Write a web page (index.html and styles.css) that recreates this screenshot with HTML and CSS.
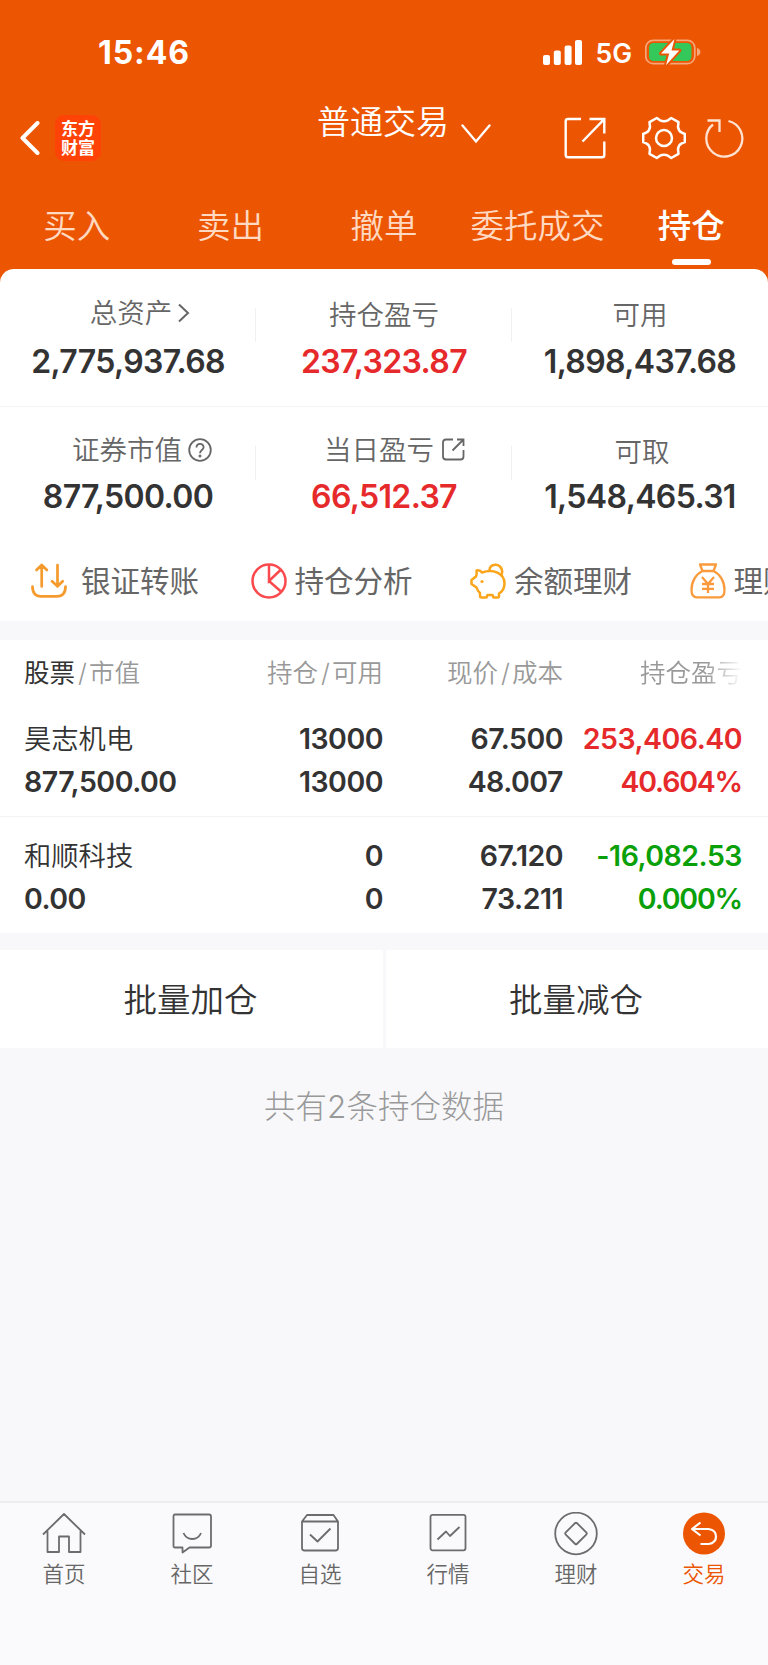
FILE: index.html
```html
<!DOCTYPE html>
<html lang="zh-CN">
<head>
    <meta charset="UTF-8">
    <meta name="viewport" content="width=device-width, initial-scale=1.0">
    <title>普通交易</title>
    <link rel="stylesheet" href="styles.css">
</head>
<body>
    <header class="header">
        <div class="status">
            <span class="time">15:46</span>
            <div class="status-right">
                <svg class="signal" width="39" height="25" viewBox="0 0 39 25" fill="#fff">
                    <rect x="0" y="15" width="7" height="10" rx="2"/>
                    <rect x="10.8" y="10.5" width="7" height="14.5" rx="2"/>
                    <rect x="21.6" y="5.5" width="7" height="19.5" rx="2"/>
                    <rect x="32" y="0" width="7" height="25" rx="2"/>
                </svg>
                <span class="net">5G</span>
                <svg class="battery" width="56" height="28" viewBox="0 0 56 28">
                    <rect x="0.8" y="2.3" width="49" height="23.4" rx="7.5" fill="none" stroke="#f7a679" stroke-width="1.7"/>
                    <path d="M52 10v8c2-.6 3.4-2 3.4-4s-1.400-3.400-3.400-4z" fill="#f7a679"/>
                    <rect x="4" y="5" width="42.5" height="18" rx="4.5" fill="#34c759"/>
                    <path d="M29.500 1L16 15.500h8.200L21 27.300 34.300 12.500h-7.800z" fill="#fff" stroke="#ec5603" stroke-width="4" stroke-linejoin="round" paint-order="stroke"/>
                </svg>
            </div>
        </div>

        <div class="nav">
            <div class="nav-left">
                <svg width="20" height="34" viewBox="0 0 20 34" fill="none" stroke="#fff" stroke-width="4" stroke-linecap="round" stroke-linejoin="round"><path d="M17.500 2L2.500 17l15 15"/></svg>
                <div class="logo">东方<br>财富</div>
            </div>
            <div class="title">
                <span>普通交易</span>
                <svg width="30" height="20" viewBox="0 0 30 20" fill="none" stroke="#fff" stroke-width="2.300" stroke-linecap="round"><path d="M1.500 1.500L15 17.500l13.500-16"/></svg>
            </div>
            <div class="nav-right">
                <svg class="icon-share" width="42" height="42" viewBox="0 0 42 42" fill="none" stroke="#fff" stroke-width="2.400">
                    <path d="M17 2H4Q1.700 2 1.700 4V38Q1.700 40.300 4 40.300H38Q40.300 40.300 40.300 38V24.500M25.500 2h14.800V16.500M40 2.300L18.500 24.500"/>
                </svg>
                <svg class="icon-gear" width="44" height="44" viewBox="0 0 44 44" fill="none" stroke="#fff" stroke-width="2.500" stroke-linejoin="round">
                    <path d="M14.800 2L18 4.300Q22 6 26 4.300L29.200 2L36.500 6.200L36 11Q36.500 15 39.800 16.600L42.800 18V26L39.800 27.400Q36.500 29 36 33L36.500 37.800L29.200 42L26 39.700Q22 38 18 39.700L14.800 42L7.500 37.800L8 33Q7.500 29 4.200 27.400L1.200 26V18L4.200 16.600Q7.500 15 8 11L7.500 6.200Z"/>
                    <circle cx="22" cy="22" r="8"/>
                </svg>
                <svg class="icon-refresh" width="40" height="40" viewBox="0 0 40 40" fill="none" stroke="#ffe3d2" stroke-width="2.300">
                    <path d="M24.500 3A18 18 0 1 1 9 6.500M3.500 2.500H15.500V14"/>
                </svg>
            </div>
        </div>

        <nav class="tabs">
            <a>买入</a>
            <a>卖出</a>
            <a>撤单</a>
            <a>委托成交</a>
            <a class="active">持仓</a>
        </nav>
    </header>

    <section class="assets">
        <div class="asset-row">
            <div class="asset">
                <div class="label label-total">总资产<svg width="13" height="20" viewBox="0 0 13 20" fill="none" stroke="#666" stroke-width="2"><path d="M2 1.500L11 10l-9 8.500"/></svg></div>
                <div class="num">2,775,937.68</div>
            </div>
            <div class="asset">
                <div class="label">持仓盈亏</div>
                <div class="num red">237,323.87</div>
            </div>
            <div class="asset">
                <div class="label">可用</div>
                <div class="num">1,898,437.68</div>
            </div>
        </div>
        <div class="asset-row second">
            <div class="asset">
                <div class="label label-market">证券市值<svg width="24" height="24" viewBox="0 0 24 24" fill="none" stroke="#666" stroke-width="1.800"><circle cx="12" cy="12" r="10.800"/><path d="M8.500 9.500C8.500 4.800 15.600 4.800 15.600 9.200C15.600 12 12 12 12 15.200"/><circle cx="12" cy="18" r=".6"/></svg></div>
                <div class="num">877,500.00</div>
            </div>
            <div class="asset">
                <div class="label label-day">当日盈亏<svg width="23" height="23" viewBox="0 0 23 23" fill="none" stroke="#666" stroke-width="1.800"><path d="M11 1.500H4Q1 1.500 1 4.500V18.500Q1 21.500 4 21.500H18.500Q21.500 21.500 21.500 18.500V12M15 1.500h6.500V8M21 2L10.500 12.500"/></svg></div>
                <div class="num red">66,512.37</div>
            </div>
            <div class="asset">
                <div class="label label-cash">可取</div>
                <div class="num">1,548,465.31</div>
            </div>
        </div>

        <div class="tools">
            <div class="tool">
                <svg width="36" height="36" viewBox="0 0 36 36" fill="none" stroke="#f59a2c" stroke-width="2.700" stroke-linecap="round" stroke-linejoin="round">
                    <path d="M1.500 23.500Q1.500 33.300 10 33.300H26Q34.500 33.300 34.500 23.500"/>
                    <path d="M10.700 23.500V2.500M5.500 7L10.700 2l5.200 5M26.500 2v21.500M21 18.300l5.500 5 5.200-5"/>
                </svg>
                <span class="transfer">银证转账</span>
            </div>
            <div class="tool">
                <svg width="36" height="36" viewBox="0 0 36 36" fill="none" stroke="#fb4a4d" stroke-width="2.500">
                    <circle cx="18" cy="18" r="16.500"/>
                    <path d="M18 1.500V18L29.500 7M18 18l12.500 11"/>
                </svg>
                <span>持仓分析</span>
            </div>
            <div class="tool">
                <svg width="36" height="36" viewBox="0 0 36 36" fill="none" stroke="#faa51a" stroke-width="2.500" stroke-linejoin="round">
                    <path d="M6.500 7.500C9 7 11 8 12 9.500C23 5.500 34.500 10 34.500 20.500C34.500 26 31.500 29 29 30.500V33.500Q28.500 34.800 27 34.500H23.500L22.500 32H17.500L16.500 34.500H11.500Q10 34.500 10 33V30Q7.500 28 6.500 24.500L1.500 21V17L6 13.500Q7 11.500 6.500 7.500Z"/>
                    <path d="M19.500 7C20 1.500 26.500 .5 30 3.500C33 6.500 32.500 10 30.800 13"/>
                    <circle cx="12" cy="18.500" r="1.600" fill="#faa51a" stroke="none"/>
                </svg>
                <span>余额理财</span>
            </div>
            <div class="tool">
                <svg width="36" height="36" viewBox="0 0 36 36" fill="none" stroke="#fa9a3c" stroke-width="2.300" stroke-linejoin="round">
                    <path d="M10 1.500H26L23.500 8H12.500ZM12.500 8C6 11 1.500 18.500 1.500 27Q1.500 34.300 7 34.300H29.500Q34.500 34.300 34.500 27C34.500 18.500 30 11 23.500 8"/>
                    <path d="M12 14l6 7 6-7M18 21v9M12 21h12M12 25.800h12"/>
                </svg>
                <span>理财</span>
            </div>
        </div>
    </section>

    <section class="positions">
        <div class="row head">
            <div><b>股票</b><i>/</i>市值</div>
            <div>持仓<i>/</i>可用</div>
            <div>现价<i>/</i>成本</div>
            <div class="fade">持仓盈亏</div>
        </div>
        <div class="row stock">
            <div><span class="name">昊志机电</span><span>877,500.00</span></div>
            <div><span>13000</span><span>13000</span></div>
            <div><span>67.500</span><span>48.007</span></div>
            <div class="red"><span>253,406.40</span><span class="pct">40.604%</span></div>
        </div>
        <div class="row stock">
            <div><span class="name">和顺科技</span><span>0.00</span></div>
            <div><span>0</span><span>0</span></div>
            <div><span>67.120</span><span>73.211</span></div>
            <div class="green"><span>-16,082.53</span><span class="pct">0.000%</span></div>
        </div>
    </section>

    <div class="batch">
        <button>批量加仓</button>
        <button>批量减仓</button>
    </div>

    <p class="count">共有2条持仓数据</p>

    <footer class="tabbar">
        <a>
            <svg width="44" height="44" viewBox="0 0 44 44"><path d="M1 22.500L22 2l21 20.500M5.500 19V40H17V24.500H27V40H38.500V19"/></svg>
            首页
        </a>
        <a>
            <svg width="44" height="44" viewBox="0 0 44 44"><path d="M5 2.500H39Q41 2.500 41 4.500V33.500Q41 35.500 39 35.500H19.500L12.500 40.500V35.500H5Q3.500 35.500 3.500 34V4.500Q3.500 2.500 5 2.500ZM13.500 21Q16 27 22.300 27T31 21"/></svg>
            社区
        </a>
        <a>
            <svg width="44" height="44" viewBox="0 0 44 44"><path d="M4 9.500L9 3H35.500L40 9.500V36Q40 38.500 37.500 38.500H6.500Q4 38.500 4 36ZM4 9.500H40M12 22.500l7.500 7L32.500 16.500"/></svg>
            自选
        </a>
        <a>
            <svg width="44" height="44" viewBox="0 0 44 44"><rect x="4.500" y="2.800" width="35" height="35.500" rx="2"/><path d="M11.500 27.500l8.500-8 4 4.500L33.500 15"/></svg>
            行情
        </a>
        <a>
            <svg width="44" height="44" viewBox="0 0 44 44"><circle cx="22" cy="21.500" r="20.800"/><rect x="14" y="13.500" width="16" height="16" rx="1.500" transform="rotate(45 22 21.500)"/></svg>
            理财
        </a>
        <a class="active">
            <svg width="44" height="44" viewBox="0 0 44 44"><circle class="disc" cx="22" cy="21.500" r="21"/><path d="M18.500 32H26.500Q34 31 34 24.500T26.500 17H10.500M18.500 10.500L10 17l8.500 6.500"/></svg>
            交易
        </a>
    </footer>
</body>
</html>
```
FILE: styles.css
```css
* {
    box-sizing: border-box;
    margin: 0;
    padding: 0;
}

body {
    width: 768px;
    height: 1665px;
    display: flex;
    flex-direction: column;
    overflow: hidden;
    background-color: #f8f8fb;
    font-family: Inter, 'Noto Sans CJK SC', sans-serif;
    font-weight: 350;
    color: #333;
}

svg {
    display: block;
    flex-shrink: 0;
}

.header {
    height: 283px;
    background-color: #ec5603;
    color: #fff;
}

.status {
    height: 104px;
    padding: 0 67px 0 98px;
    display: flex;
    align-items: center;
    justify-content: space-between;
}

.time {
    font-size: 32px;
    font-weight: 700;
    letter-spacing: 0.9px;
    margin-top: 1px;
}

.status-right {
    display: flex;
    align-items: center;
}

.net {
    font-size: 26.5px;
    font-weight: 600;
    margin: 1px 13px 0 13px;
}

.nav {
    height: 68px;
    display: grid;
    grid-template-columns: 317px 1fr auto;
    align-items: center;
    padding-right: 24px;
}

.nav-left {
    display: flex;
    align-items: center;
    gap: 15px;
    padding-left: 20px;
}

.logo {
    width: 46px;
    height: 46px;
    border-radius: 9px;
    background-color: #ff4206;
    text-align: center;
    font-family: 'Noto Sans CJK SC', sans-serif;
    font-size: 17px;
    font-weight: 700;
    line-height: 19px;
    padding-top: 3px;
}

.title {
    display: flex;
    align-items: center;
    gap: 12px;
    font-size: 33px;
    line-height: 40px;
}

.title span {
    margin-top: -32px;
}

.title svg {
    margin-top: -9px;
}

.nav-right {
    display: flex;
    align-items: center;
}

.icon-gear {
    margin-left: 36px;
}

.icon-refresh {
    margin-left: 18px;
}

.tabs {
    height: 97px;
    display: grid;
    grid-template-columns: repeat(5, 1fr);
    text-align: center;
    font-size: 33.5px;
    line-height: 40px;
    padding-top: 34px;
    color: #ffd9c2;
}

.tabs .active {
    color: #fff;
    font-weight: 500;
}

.tabs .active::after {
    content: '';
    display: block;
    width: 39px;
    height: 6px;
    margin: 13px auto 0;
    border-radius: 3px;
    background-color: #fff;
}

.assets {
    position: relative;
    height: 352px;
    margin-top: -14px;
    background-color: #fff;
    border-radius: 14px 14px 0 0;
    overflow: hidden;
}

.asset-row {
    display: grid;
    grid-template-columns: repeat(3, 1fr);
    height: 138px;
    padding-top: 26px;
    border-bottom: 1px solid #f4f4f6;
}

.asset-row.second {
    height: 122px;
    padding-top: 23px;
    border: 0;
}

.asset {
    text-align: center;
    height: 90px;
    background: linear-gradient(#f1f1f4, #f1f1f4) no-repeat right 13px / 1px 34px;
}

.second .asset {
    background-position: right 16px;
}

.asset:last-child {
    background: none;
}

.label {
    display: flex;
    align-items: center;
    justify-content: center;
    height: 40px;
    padding-bottom: 1px;
    font-size: 27.5px;
    line-height: 40px;
    color: #666;
}

.label-total {
    gap: 5px;
    padding-left: 24px;
    padding-bottom: 5px;
}

.label-market {
    gap: 6px;
    padding-left: 28px;
}

.label-day {
    gap: 8px;
    padding-left: 21px;
}

.label-cash {
    padding: 3px 0 0 4px;
}

.num {
    font-size: 32px;
    font-weight: 600;
    line-height: 40px;
    letter-spacing: -0.65px;
    margin-top: 7px;
}

.red {
    color: #e62a2b;
}

.green {
    color: #0aa00a;
}

.tools {
    display: flex;
    gap: 58px;
    height: 92px;
    padding: 14px 0 2px 31px;
}

.tool {
    display: flex;
    align-items: center;
    gap: 8px;
    flex: 0 0 161.5px;
    min-width: 0;
    font-size: 29.5px;
    font-weight: 400;
    line-height: 40px;
    color: #666;
    white-space: nowrap;
}

.transfer {
    margin-left: 6px;
}

.positions {
    margin-top: 19px;
    background-color: #fff;
    height: 293px;
}

.row {
    display: grid;
    grid-template-columns: 204px 155px 180px 179px;
    padding: 0 26px 0 24px;
    text-align: right;
}

.row > :first-child {
    text-align: left;
}

.head {
    height: 60px;
    padding-top: 13px;
    font-size: 25.5px;
    line-height: 40px;
    color: #999;
}

.head b {
    font-weight: 400;
    color: #333;
}

.head i {
    font-style: normal;
    margin: 0 2px 0 3px;
}

.fade {
    -webkit-mask-image: linear-gradient(90deg, #000 80%, transparent);
    mask-image: linear-gradient(90deg, #000 80%, transparent);
    white-space: nowrap;
}

.stock {
    height: 117px;
    padding-top: 17px;
    font-size: 28.5px;
    font-weight: 600;
    line-height: 43px;
    border-bottom: 1px solid #f3f3f5;
}

.stock:last-child {
    height: 116px;
    border: 0;
}

.stock span {
    display: block;
    white-space: nowrap;
    letter-spacing: -0.5px;
}

.stock .name {
    font-size: 27.3px;
    font-weight: 350;
    letter-spacing: 0;
    position: relative;
    top: 1px;
}

.stock .pct {
    letter-spacing: -1.2px;
}

.batch {
    display: grid;
    grid-template-columns: 383px 1fr;
    gap: 3px;
    margin-top: 17px;
    height: 98px;
}

.batch button {
    border: 0;
    background-color: #fff;
    font: inherit;
    font-size: 33.5px;
    color: #333;
    padding: 0 2px 3px 0;
}

.count {
    margin-top: 39px;
    text-align: center;
    font-size: 31.5px;
    font-weight: 300;
    line-height: 40px;
    color: #999;
}

.tabbar {
    margin-top: auto;
    height: 164px;
    display: grid;
    grid-template-columns: repeat(6, 1fr);
    background-color: #fafafc;
    border-top: 2px solid #ededf0;
}

.tabbar a {
    display: flex;
    flex-direction: column;
    align-items: center;
    padding-top: 9px;
    font-size: 21.5px;
    line-height: 32px;
    color: #666;
}

.tabbar svg {
    margin-bottom: 2px;
    fill: none;
    stroke: #6c6c6e;
    stroke-width: 1.8;
    stroke-linejoin: round;
}

.tabbar .active {
    color: #ec5603;
}

.tabbar .active svg {
    stroke: #fff;
    stroke-width: 2.2;
}

.tabbar .active .disc {
    fill: #ec5603;
    stroke: none;
}
```
